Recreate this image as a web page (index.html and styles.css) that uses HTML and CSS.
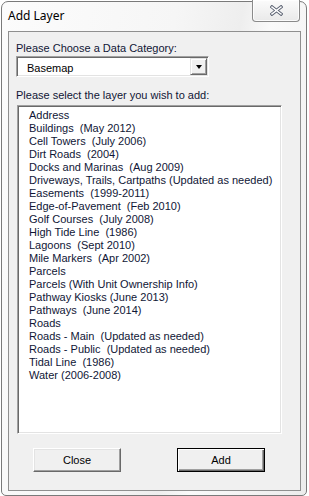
FILE: index.html
```html
<!DOCTYPE html>
<html>
<head>
<meta charset="utf-8">
<link rel="stylesheet" href="styles.css">
</head>
<body>
<div class="window">
  <div class="titlebar">
    <span class="title">Add Layer</span>
    <div class="close-x">
      <svg width="13" height="11" viewBox="0 0 13 11">
        <path d="M2 2 L11 9 M11 2 L2 9" stroke="#5b6272" stroke-width="3.4" stroke-linecap="square" fill="none"/>
        <path d="M2 2 L11 9 M11 2 L2 9" stroke="#ffffff" stroke-width="1.5" stroke-linecap="square" fill="none"/>
      </svg>
    </div>
  </div>
  <div class="client">
    <div class="label first">Please Choose a Data Category:</div>
    <div class="combo">
      <span class="combo-text">Basemap</span>
      <span class="combo-btn"><span class="tri"></span></span>
    </div>
    <div class="label second">Please select the layer you wish to add:</div>
    <div class="listbox">
      <div class="item">Address</div>
      <div class="item">Buildings&nbsp; (May 2012)</div>
      <div class="item">Cell Towers&nbsp; (July 2006)</div>
      <div class="item">Dirt Roads&nbsp; (2004)</div>
      <div class="item">Docks and Marinas&nbsp; (Aug 2009)</div>
      <div class="item">Driveways, Trails, Cartpaths (Updated as needed)</div>
      <div class="item">Easements&nbsp; (1999-2011)</div>
      <div class="item">Edge-of-Pavement&nbsp; (Feb 2010)</div>
      <div class="item">Golf Courses&nbsp; (July 2008)</div>
      <div class="item">High Tide Line&nbsp; (1986)</div>
      <div class="item">Lagoons&nbsp; (Sept 2010)</div>
      <div class="item">Mile Markers&nbsp; (Apr 2002)</div>
      <div class="item">Parcels</div>
      <div class="item">Parcels (With Unit Ownership Info)</div>
      <div class="item">Pathway Kiosks (June 2013)</div>
      <div class="item">Pathways&nbsp; (June 2014)</div>
      <div class="item">Roads</div>
      <div class="item">Roads - Main&nbsp; (Updated as needed)</div>
      <div class="item">Roads - Public&nbsp; (Updated as needed)</div>
      <div class="item">Tidal Line&nbsp; (1986)</div>
      <div class="item">Water (2006-2008)</div>
    </div>
    <div class="buttons">
      <div class="btn">Close</div>
      <div class="btn default">Add</div>
    </div>
  </div>
</div>
</body>
</html>
```
FILE: styles.css
```css
html, body {
  margin: 0;
  padding: 0;
  background: #ffffff;
}
body {
  width: 309px;
  height: 496px;
  overflow: hidden;
}
.window {
  box-sizing: border-box;
  margin: 1px 0 0 1px;
  width: 306px;
  height: 495px;
  border: 1px solid #7a7a7a;
  border-radius: 7px 7px 5px 5px;
  background: linear-gradient(100deg, #fcfcfc 0%, #f6f6f6 45%, #eeeeee 62%, #fafafa 70%, #ececec 100%);
  display: flex;
  flex-direction: column;
}
.titlebar {
  height: 29px;
  flex: none;
  display: flex;
  justify-content: space-between;
  align-items: flex-start;
  padding: 0 6px 0 6px;
}
.title {
  font-family: "Noto Sans", "Open Sans", sans-serif;
  font-size: 12px;
  line-height: 16px;
  color: #000;
  margin-top: 6px;
}
.close-x {
  box-sizing: border-box;
  width: 48px;
  height: 22px;
  margin-top: -2px;
  border: 1px solid #8a8a8a;
  border-top: none;
  border-radius: 0 0 4px 4px;
  background: linear-gradient(#fbfbfb, #e9e9e9);
  box-shadow: inset 0 0 0 1px rgba(255,255,255,0.8);
  display: flex;
  align-items: center;
  justify-content: center;
}
.close-x svg { display: block; margin-top: 0px; }
.client {
  box-sizing: border-box;
  flex: 1;
  margin: 0 5px 4px 6px;
  border: 1px solid #8f8f8f;
  background: #f0f0f0;
  display: flex;
  flex-direction: column;
  align-items: flex-start;
  font-family: "Liberation Sans", Arial, sans-serif;
  font-size: 11px;
  line-height: 13px;
  color: #101636;
}
.label.first {
  margin: 10px 0 0 7px;
}
.label.second {
  margin: 12px 0 0 7px;
}
.combo {
  box-sizing: border-box;
  margin: 1px 0 0 7px;
  width: 193px;
  height: 21px;
  border: 1px solid;
  border-color: #a0a0a0 #ffffff #ffffff #a0a0a0;
  box-shadow: inset 1px 1px 0 #696969, inset -1px -1px 0 #e3e3e3;
  background: #ffffff;
  padding: 1px;
  display: flex;
  align-items: flex-start;
}
.combo-text {
  padding: 4px 0 0 9px;
  color: #000;
}
.combo-btn {
  box-sizing: border-box;
  margin-left: auto;
  width: 17px;
  height: 17px;
  background: #f0f0f0;
  border: 1px solid;
  border-color: #e3e3e3 #696969 #696969 #e3e3e3;
  box-shadow: inset 1px 1px 0 #ffffff, inset -1px -1px 0 #a0a0a0;
  display: flex;
  align-items: center;
  justify-content: center;
}
.tri {
  width: 0;
  height: 0;
  border-left: 3.5px solid transparent;
  border-right: 3.5px solid transparent;
  border-top: 4px solid #000;
  margin-top: 1px;
}
.listbox {
  box-sizing: border-box;
  margin: 3px 0 0 8px;
  width: 265px;
  height: 329px;
  border: 1px solid;
  border-color: #a0a0a0 #ffffff #ffffff #a0a0a0;
  box-shadow: inset 1px 1px 0 #696969, inset -1px -1px 0 #e3e3e3;
  background: #ffffff;
  padding: 3px 0 0 11px;
}
.item {
  white-space: nowrap;
  height: 13px;
}
.buttons {
  margin: 14px 0 0 24px;
  display: flex;
  gap: 56px;
}
.btn {
  box-sizing: border-box;
  width: 88px;
  height: 24px;
  background: #f0f0f0;
  border: 1px solid;
  border-color: #ffffff #696969 #696969 #ffffff;
  box-shadow: inset -1px -1px 0 #a0a0a0, inset 1px 1px 0 #e3e3e3;
  display: flex;
  align-items: center;
  justify-content: center;
  color: #000;
}
.btn.default {
  border: 1px solid #000;
  box-shadow: inset 1px 1px 0 #ffffff, inset -1px -1px 0 #696969, inset -2px -2px 0 #a0a0a0;
}
```
